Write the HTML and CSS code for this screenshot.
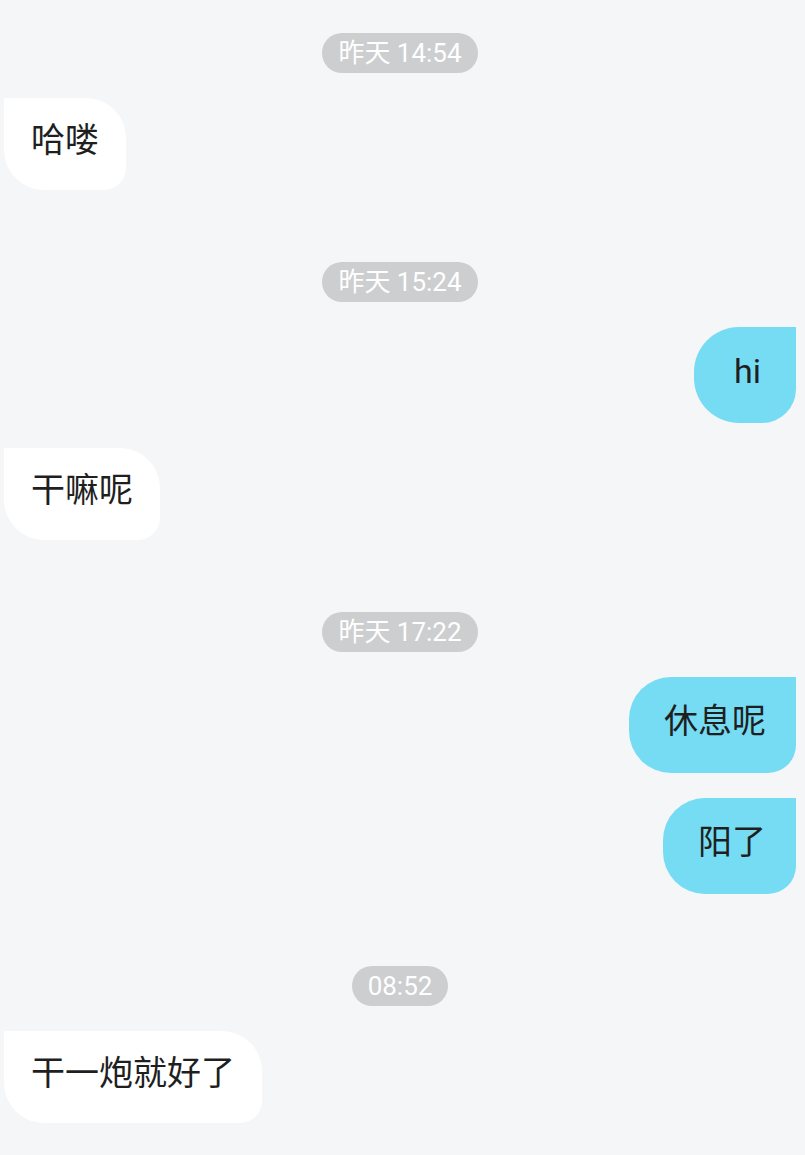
FILE: index.html
```html
<!DOCTYPE html>
<html lang="zh-CN">
<head>
    <meta charset="UTF-8">
    <meta name="viewport" content="width=device-width, initial-scale=1.0">
    <title>Chat</title>
    <link rel="stylesheet" href="styles.css">
</head>
<body>
    <div class="chat">
        <div class="time"><span>昨天 14:54</span></div>
        <div class="row left"><div class="bubble">哈喽</div></div>

        <div class="time"><span>昨天 15:24</span></div>
        <div class="row right"><div class="bubble short">hi</div></div>
        <div class="row left"><div class="bubble">干嘛呢</div></div>

        <div class="time"><span>昨天 17:22</span></div>
        <div class="row right"><div class="bubble">休息呢</div></div>
        <div class="row right"><div class="bubble">阳了</div></div>

        <div class="time"><span>08:52</span></div>
        <div class="row left"><div class="bubble">干一炮就好了</div></div>
    </div>
</body>
</html>
```

FILE: styles.css
```css
body {
    margin: 0;
    background-color: #f5f6f8;
    font-family: Roboto, "Noto Sans CJK SC", sans-serif;
    color: #1f1f1f;
}

.chat {
    display: flex;
    flex-direction: column;
    gap: 25px;
    padding: 33px 9px 40px 4px;
}

.time {
    display: flex;
    justify-content: center;
    margin-top: 47px;
}

.time:first-child {
    margin-top: 0;
}

.time span {
    background-color: #cdced0;
    color: #fff;
    font-size: 26px;
    line-height: 40px;
    padding: 0 16px;
    border-radius: 20px;
}

.row {
    display: flex;
}

.row.left {
    justify-content: flex-start;
}

.row.right {
    justify-content: flex-end;
}

.bubble {
    font-size: 34px;
    line-height: 44px;
}

/* incoming: white, square top-left corner */
.left .bubble {
    background-color: #fff;
    padding: 20px 27px 28px;
    border-radius: 0 40px 22px 40px;
}

/* outgoing: blue, square top-right corner */
.right .bubble {
    background-color: #75dcf3;
    padding: 22px 30px 30px 35px;
    border-radius: 42px 0 28px 42px;
}

.right .bubble.short {
    min-width: 37px;
    text-align: center;
    border-radius: 45px 0 34px 45px;
}
```
